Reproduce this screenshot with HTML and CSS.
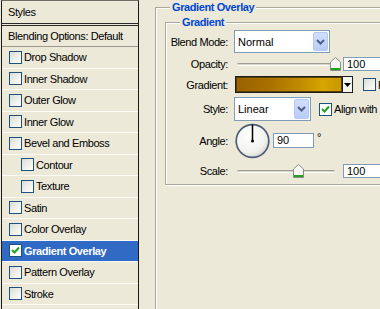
FILE: index.html
```html
<!DOCTYPE html>
<html>
<head>
<meta charset="utf-8">
<link rel="stylesheet" href="styles.css">
</head>
<body>
<div class="panel">
  <div class="phead">Styles</div>
  <div class="prow blend">Blending Options: Default</div>
  <div class="prow"><span class="cb"></span>Drop Shadow</div>
  <div class="prow"><span class="cb"></span>Inner Shadow</div>
  <div class="prow"><span class="cb"></span>Outer Glow</div>
  <div class="prow"><span class="cb"></span>Inner Glow</div>
  <div class="prow"><span class="cb"></span>Bevel and Emboss</div>
  <div class="prow sub"><span class="cb"></span>Contour</div>
  <div class="prow sub"><span class="cb"></span>Texture</div>
  <div class="prow"><span class="cb"></span>Satin</div>
  <div class="prow"><span class="cb"></span>Color Overlay</div>
  <div class="prow sel"><span class="cb on"><svg width="11" height="11" viewBox="0 0 11 11"><polyline points="2,5 4.5,7.5 9,2.5" fill="none" stroke="#21A121" stroke-width="2"/></svg></span>Gradient Overlay</div>
  <div class="prow"><span class="cb"></span>Pattern Overlay</div>
  <div class="prow"><span class="cb"></span>Stroke</div>
</div>
<div class="main">
  <div class="group outer">
    <div class="legend">Gradient Overlay</div>
    <div class="group inner">
      <div class="legend">Gradient</div>
      <div class="frow r1">
        <div class="lbl">Blend Mode:</div>
        <div class="select blendsel"><span class="val">Normal</span><span class="dbtn"><svg width="9" height="6" viewBox="0 0 9 6"><polyline points="1,1 4.5,4.5 8,1" fill="none" stroke="#4D6185" stroke-width="2"/></svg></span></div>
      </div>
      <div class="frow r2">
        <div class="lbl">Opacity:</div>
        <div class="slider">
          <div class="track"></div>
          <svg class="thumb thumb-op" width="11" height="14" viewBox="0 0 11 14"><path d="M0.5,5 L5.5,0.5 L10.5,5 V13.5 H0.5 Z" fill="#F6F6F2" stroke="#8C8C84"/><rect x="1" y="11" width="9" height="2" fill="#21A121"/></svg>
        </div>
        <div class="num">100</div>
      </div>
      <div class="frow r3">
        <div class="lbl">Gradient:</div>
        <div class="swatch"></div>
        <div class="sbtn"><svg width="7" height="4" viewBox="0 0 7 4"><polygon points="0,0 7,0 3.5,4" fill="#000"/></svg></div>
        <span class="cb rev"></span><span class="txt">Reverse</span>
      </div>
      <div class="frow r4">
        <div class="lbl">Style:</div>
        <div class="select stylesel"><span class="val">Linear</span><span class="dbtn"><svg width="9" height="6" viewBox="0 0 9 6"><polyline points="1,1 4.5,4.5 8,1" fill="none" stroke="#4D6185" stroke-width="2"/></svg></span></div>
        <span class="cb on align"><svg width="11" height="11" viewBox="0 0 11 11"><polyline points="2,5 4.5,7.5 9,2.5" fill="none" stroke="#21A121" stroke-width="2"/></svg></span><span class="txt">Align with Layer</span>
      </div>
      <div class="frow r5">
        <div class="lbl">Angle:</div>
        <svg class="dial" width="35" height="36" viewBox="0 0 35 36">
          <defs><radialGradient id="dg" cx="0.4" cy="0.35" r="0.7"><stop offset="0" stop-color="#FFFFFF"/><stop offset="0.7" stop-color="#F2F2EE"/><stop offset="1" stop-color="#D6D6D0"/></radialGradient></defs>
          <circle cx="17.5" cy="18" r="16.3" fill="url(#dg)" stroke="#4F5D7A" stroke-width="1.7"/>
          <line x1="17.5" y1="1.5" x2="17.5" y2="18" stroke="#000" stroke-width="1.5"/>
          <circle cx="17.5" cy="18" r="1.5" fill="#000"/>
        </svg>
        <div class="num anglenum">90</div>
        <span class="deg">°</span>
      </div>
      <div class="frow r6">
        <div class="lbl">Scale:</div>
        <div class="slider">
          <div class="track"></div>
          <svg class="thumb thumb-sc" width="11" height="14" viewBox="0 0 11 14"><path d="M0.5,5 L5.5,0.5 L10.5,5 V13.5 H0.5 Z" fill="#F6F6F2" stroke="#8C8C84"/><rect x="1" y="11" width="9" height="2" fill="#21A121"/></svg>
        </div>
        <div class="num">100</div>
      </div>
    </div>
  </div>
</div>
</body>
</html>
```

FILE: styles.css
```css
* { box-sizing: border-box; }
html, body { margin: 0; padding: 0; }
body {
  width: 380px;
  height: 309px;
  overflow: hidden;
  background: #ECE9D8;
  font-family: "Liberation Sans", Arial, sans-serif;
  font-size: 11px;
  letter-spacing: -0.4px;
  color: #000;
  display: flex;
  align-items: flex-start;
}
.panel {
  margin-left: 1px;
  width: 138px;
  flex: none;
  border-left: 1px solid #1a1a1a;
  border-right: 1px solid #1a1a1a;
  border-top: 1px solid #6f6d64;
  height: 320px;
}
.phead {
  height: 23px;
  line-height: 23px;
  padding-left: 6px;
  border-bottom: 1px solid #2a2a2a;
}
.phead + .prow { border-top: 1px solid #2a2a2a; margin-top: 1px; }
.prow {
  height: 21.5px;
  display: flex;
  align-items: center;
  padding-left: 7px;
  border-bottom: 1px solid #FBFAF5;
  white-space: nowrap;
}
.prow.blend {
  height: 22px;
  padding-left: 6px;
  border-bottom-color: #9C9A8E;
}
.prow.sub { padding-left: 19px; }
.prow.sel { background: #316AC5; color: #fff; font-weight: bold; }
.cb {
  width: 13px;
  height: 13px;
  flex: none;
  border: 1px solid #1C5180;
  background: linear-gradient(135deg, #DCDCD5 0%, #EEEEEA 50%, #FFFFFF 100%);
  margin-right: 2px;
  display: inline-flex;
  align-items: center;
  justify-content: center;
}
.cb.on { background: #fff; }
.main {
  flex: none;
  width: 241px;
  padding-left: 16px;
  padding-top: 7px;
}
.group {
  position: relative;
  border-top: 1px solid #ACA899;
  border-left: 1px solid #ACA899;
  box-shadow: inset 1px 1px 0 #fff;
}
.outer {
  width: 320px;
  height: 320px;
}
.inner {
  margin-left: 9px;
  margin-top: 14px;
  width: 300px;
  height: 163px;
  border-bottom: 1px solid #ACA899;
  box-shadow: inset 1px 1px 0 #fff, 0 1px 0 #fff;
  padding-top: 7px;
}
.legend {
  position: absolute;
  top: -8px;
  left: 14px;
  padding: 0 2px;
  background: #ECE9D8;
  color: #0046D5;
  font-weight: bold;
  line-height: 14px;
}
.frow {
  display: flex;
  align-items: center;
  white-space: nowrap;
}
.frow > * { flex: none; }
.lbl {
  width: 62px;
  text-align: right;
  margin-right: 6px;
}
.r1 { height: 23px; }
.r2 { height: 14px; margin-top: 4px; }
.r3 { height: 17px; margin-top: 5px; }
.r4 { height: 24px; margin-top: 4px; }
.r5 { height: 36px; margin-top: 2px; }
.r6 { height: 14px; margin-top: 5px; }
.select {
  height: 100%;
  border: 1px solid #7F9DB9;
  background: #fff;
  display: flex;
  align-items: stretch;
  padding: 1px;
}
.select .val { flex: 1; padding-left: 2px; display: flex; align-items: center; letter-spacing: 0; }
.blendsel { width: 96px; }
.stylesel { width: 77px; }
.dbtn {
  width: 15px;
  background: linear-gradient(#D2DEFC, #B9CCF8);
  border: 1px solid #B5C8F5;
  border-radius: 2px;
  display: flex;
  align-items: center;
  justify-content: center;
}
.slider {
  position: relative;
  width: 109px;
  height: 14px;
  padding-left: 3px;
  display: flex;
  align-items: center;
}
.track {
  width: 98px;
  height: 3px;
  border-top: 1px solid #9D9C95;
  border-bottom: 1px solid #fff;
  background: #D8D5C8;
  border-radius: 2px;
}
.thumb { position: absolute; top: 0; }
.thumb-op { left: 96px; }
.thumb-sc { left: 59px; }
.num {
  width: 45px;
  height: 14px;
  border: 1px solid #7F9DB9;
  background: #fff;
  padding-left: 3px;
  line-height: 12px;
  letter-spacing: 0;
}
.swatch {
  margin-left: 1px;
  width: 108px;
  height: 17px;
  border: 1px solid #1E1E1E;
  box-shadow: inset 0 0 0 1px #5a4000;
  background: linear-gradient(to right, #996200 0%, #A77000 30%, #C08A00 60%, #D6A600 82%, #C99600 100%);
}
.sbtn {
  width: 10px;
  height: 17px;
  border: 1px solid #1E1E1E;
  border-left: none;
  background: #F4F4F0;
  display: flex;
  align-items: center;
  justify-content: center;
}
.rev { margin-left: 10px; }
.txt { margin-left: 0; }
.align { margin-left: 8px; }
.dial { margin-left: 1px; }
.anglenum { width: 41px; height: 15px; margin-left: 3px; margin-top: -2px; }
.deg { margin-left: 3px; align-self: flex-start; margin-top: 8px; }
```
